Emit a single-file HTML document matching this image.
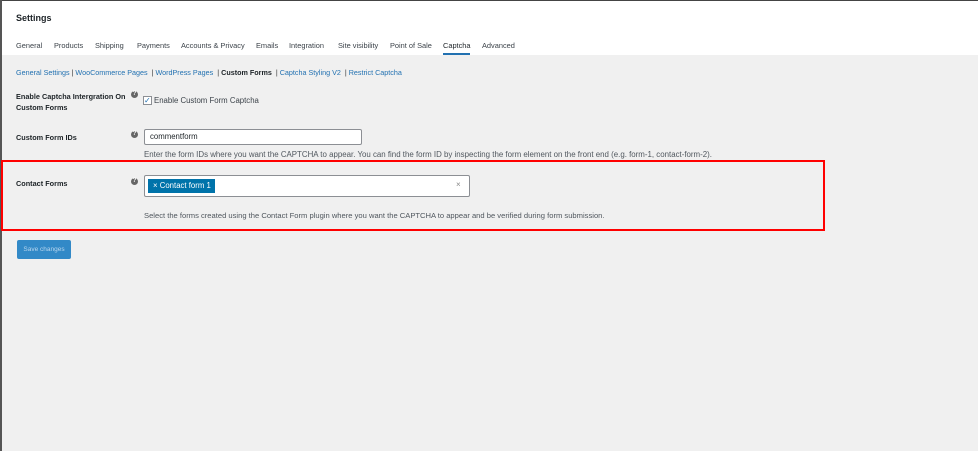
<!DOCTYPE html>
<html><head><style>
body{margin:0;width:978px;height:451px;background:#f0f0f0;font-family:"Liberation Sans",sans-serif;position:relative;overflow:hidden;color:#1d2327}
.a{position:absolute;white-space:nowrap}
.hdr{position:absolute;left:0;top:0;width:978px;height:55px;background:#fff;border-top:1px solid #444;box-sizing:border-box}
.lb{position:absolute;left:0;top:0;width:2px;height:451px;background:#555}
.tab{font-size:7.4px;color:#3c434a;top:41px}
.sub{font-size:7.2px;color:#2271b1;top:68px}
.lbl{font-size:7.3px;font-weight:bold;color:#1d2327}
.q{width:7px;height:7px;border-radius:50%;background:#666;color:#fff;font-size:6px;text-align:center;line-height:7px;font-weight:bold}
.desc{font-size:7.6px;color:#50575e}
</style></head><body>
<div class="hdr"></div>
<div class="lb"></div>
<div class="a" style="left:16px;top:13px;font-size:9px;font-weight:bold">Settings</div>
<div class="a tab" style="left:16px">General</div>
<div class="a tab" style="left:54px">Products</div>
<div class="a tab" style="left:95px">Shipping</div>
<div class="a tab" style="left:137px">Payments</div>
<div class="a tab" style="left:181px">Accounts &amp; Privacy</div>
<div class="a tab" style="left:256px">Emails</div>
<div class="a tab" style="left:289px">Integration</div>
<div class="a tab" style="left:338px">Site visibility</div>
<div class="a tab" style="left:390px">Point of Sale</div>
<div class="a tab" style="left:443px;color:#1d2327">Captcha</div>
<div class="a" style="left:443px;top:53px;width:27px;height:2px;background:#2271b1"></div>
<div class="a tab" style="left:482px">Advanced</div>
<div class="a sub" style="left:16px">General Settings <span style="color:#333">|</span> WooCommerce Pages <span style="color:#333">&nbsp;|</span> WordPress Pages <span style="color:#333">&nbsp;|</span> <b style="color:#1d2327">Custom Forms</b> <span style="color:#333">&nbsp;|</span> Captcha Styling V2 <span style="color:#333">&nbsp;|</span> Restrict Captcha</div>
<div class="a lbl" style="left:16px;top:91px;line-height:11px">Enable Captcha Intergration On<br>Custom Forms</div>
<div class="a q" style="left:131px;top:91px">?</div>
<div class="a" style="left:143px;top:96px;width:7px;height:7px;border:1px solid #8c8f94;background:#fff;font-size:8px;line-height:7px;color:#2271b1">✓</div>
<div class="a desc" style="left:154px;top:96px;font-size:7.8px;color:#3c434a">Enable Custom Form Captcha</div>
<div class="a lbl" style="left:16px;top:133px">Custom Form IDs</div>
<div class="a q" style="left:131px;top:131px">?</div>
<div class="a" style="left:144px;top:129px;height:14px;border:1px solid #8c8f94;border-radius:2px;background:#fff;font-size:7.8px;line-height:14px;padding-left:5px;box-sizing:content-box;width:211px">commentform</div>
<div class="a desc" style="left:144px;top:150px;font-size:7.9px">Enter the form IDs where you want the CAPTCHA to appear. You can find the form ID by inspecting the form element on the front end (e.g. form-1, contact-form-2).</div>
<div class="a" style="left:1px;top:160px;width:820px;height:67px;border:2px solid #f00"></div>
<div class="a lbl" style="left:16px;top:179px">Contact Forms</div>
<div class="a q" style="left:131px;top:178px">?</div>
<div class="a" style="left:144px;top:175px;width:324px;height:20px;border:1px solid #8c8f94;border-radius:2px;background:#fff"></div>
<div class="a" style="left:148px;top:179px;width:67px;height:14px;background:#0073aa;color:#fff;font-size:7.8px;line-height:14px;padding-left:5px;box-sizing:border-box">× Contact form 1</div>
<div class="a" style="left:456px;top:180px;font-size:8px;color:#888">×</div>
<div class="a desc" style="left:144px;top:211px">Select the forms created using the Contact Form plugin where you want the CAPTCHA to appear and be verified during form submission.</div>
<div class="a" style="left:17px;top:240px;width:54px;height:19px;background:#3289c7;border-radius:2px;color:#b8d6ee;font-size:6.5px;line-height:19px;text-align:center">Save changes</div>
</body></html>
